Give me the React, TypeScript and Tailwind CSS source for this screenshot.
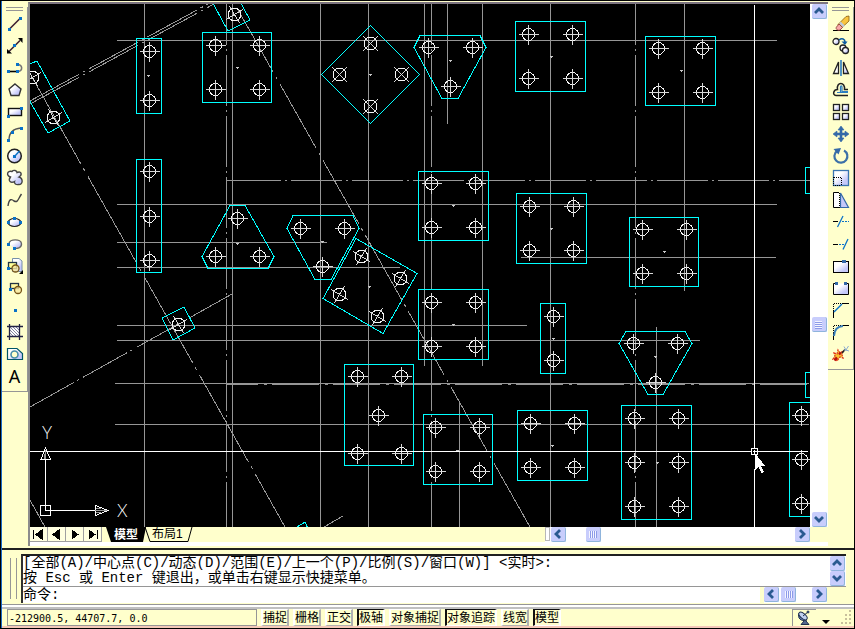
import { useState, type ReactNode } from 'react';

const GRAY = '#969696';
const CYAN = '#00ffff';

// x, y, width, height
const plates = [
  [136, 38, 25, 75], [202, 32, 69, 70], [136, 159, 25, 113], [515, 21, 70, 70],
  [645, 36, 70, 69], [418, 171, 70, 69], [516, 193, 70, 70], [629, 217, 69, 69],
  [418, 289, 70, 70], [540, 303, 25, 70], [344, 364, 69, 101], [423, 414, 69, 70],
  [517, 410, 70, 70], [621, 405, 70, 114], [789, 402, 40, 114], [805, 167, 20, 26],
  [805, 372, 20, 25],
];

const outlines = [
  '370.5,25.5 419.5,74.5 370.5,123.5 321.5,74.5',
  '420,35.5 480,35.5 486,47.5 458,98.5 442,98.5 414,47.5',
  '230,205.5 245,205.5 274,256.5 268,268.5 208,268.5 202,256.5',
  '293,215.5 353,215.5 359,228.5 331,279.5 315,279.5 287,228.5',
  '356,238.5 417,273.5 383,333.5 323,298.5',
  '626,331.5 685,331.5 692,343.5 663,394.5 648,394.5 619,343.5',
  '184,307 195,328 173,340 162,318',
  '20,68 37,61 70,121 48,133 20,84',
  '209,-4 228,31 250,20 237,-4',
  '297,527 305,522 313,540 301,540',
];

const bolts = [
  [149, 51], [149, 100], [215, 45], [259, 45], [215, 89], [259, 89],
  [149, 171], [149, 216], [149, 260], [428, 47], [472, 47], [450, 86],
  [528, 34], [572, 34], [528, 78], [572, 78], [658, 48], [702, 48], [658, 92], [702, 92],
  [431, 183], [475, 183], [431, 227], [475, 227], [529, 206], [573, 206], [529, 250], [573, 250],
  [642, 229], [686, 229], [642, 273], [686, 273], [237, 218], [215, 256], [259, 256],
  [300, 228], [344, 228], [322, 266], [431, 302], [475, 302], [431, 346], [475, 346],
  [553, 316], [553, 360], [357, 376], [401, 376], [378, 415], [357, 453], [401, 453],
  [435, 427], [479, 427], [435, 471], [479, 471], [530, 423], [574, 423], [530, 467], [574, 467],
  [633, 343], [677, 343], [655, 382], [634, 418], [678, 418], [634, 462], [678, 462],
  [634, 506], [678, 506], [801, 415], [801, 459], [801, 503],
];

// x, y, rotation
const turnedBolts = [
  [370, 43, 45], [339, 74, 45], [401, 74, 45], [370, 106, 45],
  [361, 256, 30], [400, 278, 30], [339, 294, 30], [377, 316, 30],
  [178, 324, 60], [53, 117, 60], [32, 77, 60], [234, 14, 60],
];

const centres = [
  [148, 75], [237, 67], [370, 74], [450, 60], [551, 56], [681, 70], [453, 205], [551, 228],
  [664, 251], [453, 324], [553, 338], [655, 356], [657, 462], [457, 450], [552, 445],
  [369, 286], [322, 241], [237, 243],
];

// y, from, to
const rows = [
  [40, 117, 777], [204, 117, 777], [242, 117, 327], [267, 117, 400], [325, 117, 527],
  [340, 117, 700], [383, 115, 809], [424, 115, 809], [257, 521, 776],
];

// x, from, to
const columns = [
  [144, 4, 527], [232, 4, 527], [320, 4, 527], [368, 4, 527], [424, 4, 366], [447, 4, 124],
  [482, 4, 366], [550, 4, 527], [459, 403, 527], [684, 4, 291], [656, 327, 527],
];

function Drawing() {
  return (
    <svg className="min-w-0 flex-1 bg-black" role="img" aria-label="模型空间">
      <defs>
        <linearGradient id="shade" x1="0" y1="0" x2="1" y2="1">
          <stop offset="0.35" stopColor="#ffffff" />
          <stop offset="0.75" stopColor="#c4c8fa" />
        </linearGradient>
      </defs>
      <g transform="translate(-30 -4)" fill="none" shapeRendering="crispEdges">
        <g stroke={GRAY}>
          {rows.map(([y, a, b]) => (
            <path key={y} d={`M${a} ${y + 0.5}H${b}`} />
          ))}
          {columns.map(([x, a, b]) => (
            <path key={x} d={`M${x + 0.5} ${a}V${b}`} />
          ))}
          <path d="M226 180.5H230" />
          <path d="M230 180.5H1200M226.5 -6V900M431.5 -6V900M635.5 -6V900" strokeDasharray="51 4 2 4" />
          <path d="M226 384.5H1200" strokeDasharray="32 6 3 5 15 0" />
          <path d="M30 101L208 4M30 104L214 4" strokeDasharray="56 4 3 4" />
          <path d="M32 77L285 527" strokeDasharray="100 5 3 6" />
          <path d="M237 8L530 527" strokeDasharray="74 5 3 5" />
          <path d="M30 407L232 294" strokeDasharray="50 4 2 5" />
          <path d="M30 500L45 527M324 527L343 516" />
        </g>
        <g stroke={CYAN}>
          {plates.map(([x, y, w, h]) => (
            <rect key={`${x}-${y}`} x={x + 0.5} y={y + 0.5} width={w} height={h} />
          ))}
          {outlines.map((points) => (
            <polygon key={points} points={points} />
          ))}
        </g>
        <g stroke="#f4f4f4">
          {bolts.map(([x, y]) => (
            <g key={`${x}-${y}`} transform={`translate(${x + 0.5} ${y + 0.5})`}>
              <circle r="6" />
              <path d="M-10 0H10M0 -10V10" stroke="#d8d8d8" />
            </g>
          ))}
          {turnedBolts.map(([x, y, turn]) => (
            <g key={`${x}-${y}`} transform={`translate(${x + 0.5} ${y + 0.5}) rotate(${turn})`}>
              <circle r="6.4" />
              <path d="M-10 0H10M0 -10V10" stroke="#d8d8d8" />
            </g>
          ))}
          {centres.map(([x, y]) => (
            <path key={`${x}-${y}`} d={`M${x - 1} ${y + 0.5}h3M${x + 0.5} ${y}v2`} stroke="#c8c8c8" />
          ))}
        </g>

        {/* crosshair */}
        <g stroke="#ffffff">
          <path d="M30 451.5H751M758 451.5H808M754.5 5V448M754.5 469V900" />
          <rect x="751.5" y="448.5" width="6" height="6" />
          <path d="M753 451.5h4M754.5 450v4" />
        </g>
        <path d="M755 453V470L758.500 467L761.500 473L764 472L761 466H765Z" fill="#ffffff" />

        {/* UCS icon */}
        <g stroke="#ffffff">
          <rect x="40.5" y="505.5" width="10" height="10" />
          <path d="M45.5 510.500V459M46 510.500H95" />
          <path d="M45.500 448L41 459.500H50.500ZM95.500 505.500V515.500L108 510.500Z" />
          <path d="M45.500 450V459M44 454V459M95 510.500H107M96 508.500H101M96 512.500H101" stroke="#999" />
        </g>
        <g fill="#ffffff" className="font-['Lato'] text-[17px] font-light">
          <text x="42" y="439">Y</text>
          <text x="117" y="517">X</text>
        </g>
      </g>
    </svg>
  );
}

function Node({ x, y }: { x: number; y: number }) {
  return <rect x={x - 1} y={y - 1} width="3" height="3" fill="#0a72c8" stroke="none" />;
}

const drawTools: [string, ReactNode][] = [
  ['直线', <><path d="M3 14.500L14 3.500" stroke="#402030" strokeWidth="1.6" /><Node x={3} y={14} /><Node x={14} y={3} /></>],
  ['构造线', <><path d="M3 14.500L14 3.500" stroke="#402030" strokeWidth="1.6" /><path d="M1 16.500V12L6 16.500ZM16.500 1H12L16.500 6Z" fill="#000" stroke="none" /><Node x={8} y={8} /></>],
  ['多段线', <><path d="M3 12.500H11" stroke="#000" strokeWidth="1.6" /><path d="M12 12.500C17 12 17 5 11 5.500" stroke="#777" strokeWidth="1.6" /><Node x={2} y={12} /><Node x={11} y={12} /><Node x={11} y={5} /></>],
  ['正多边形', <path d="M9 3L15 8L13 14.500H5L3 8Z" fill="url(#shade)" stroke="#333" strokeWidth="1.4" />],
  ['矩形', <><rect x="2.500" y="5.500" width="13" height="7" fill="url(#shade)" stroke="#111" strokeWidth="1.4" /><Node x={2} y={13} /><Node x={15} y={5} /></>],
  ['圆弧', <><path d="M3 15Q3 4 15 3" stroke="#555" strokeWidth="1.4" /><Node x={2} y={15} /><Node x={6} y={7} /><Node x={15} y={3} /></>],
  ['圆', <><circle cx="8.500" cy="9" r="6.800" fill="url(#shade)" strokeWidth="1.5" /><path d="M8.500 9.500L13.500 4" stroke="#0a72c8" strokeWidth="1.4" /><Node x={8} y={9} /></>],
  ['修订云线', <path d="M4.500 8C0 6.500 1 1 6 2.500C7.500 0.500 11 1.500 11 3.500C15.500 1.500 16.500 6 13 8C17.500 9.500 17 16 12.500 15.500C10 16 8 14.500 8.500 12.500C5 14.500 1.500 12 4.500 8Z" fill="url(#shade)" stroke="#444" strokeWidth="1.4" />],
  ['样条曲线', <path d="M2 15C3 7 6 8 8 10C12 12 12 8 15.500 3" stroke="#444" strokeWidth="1.4" />],
  ['椭圆', <><ellipse cx="8.500" cy="9.500" rx="6.500" ry="4" fill="url(#shade)" strokeWidth="1.2" /><Node x={2} y={9} /><Node x={8} y={5} /><Node x={14} y={9} /></>],
  ['椭圆弧', <><path d="M3 9C3 3.500 15.500 3.500 15.500 9C15.500 13 11 14 8 13" fill="url(#shade)" stroke="#666" strokeWidth="1.4" /><Node x={2} y={9} /><Node x={8} y={13} /></>],
  ['插入块', <><path d="M6.500 1.500H13L16 4V14.500H6.500Z" fill="url(#shade)" stroke="#7890a8" /><rect x="2.500" y="5.500" width="8" height="6" fill="#ffff98" stroke="#234" strokeWidth="1.3" /><circle cx="9.500" cy="11.500" r="3.500" fill="#f8e8a0" fillOpacity="0.8" stroke="#765418" strokeWidth="1.3" /><Node x={2} y={11} /><path d="M17 13V17H13Z" fill="#000" stroke="none" /></>],
  ['创建块', <><rect x="4.500" y="4.500" width="8" height="5" fill="#fff8a0" stroke="#234" strokeWidth="1.3" /><circle cx="12" cy="11" r="3.500" fill="#f8e8a0" fillOpacity="0.8" stroke="#765418" strokeWidth="1.3" /><Node x={4} y={10} /></>],
  ['点', <Node x={9} y={9} />],
  ['图案填充', <><rect x="4" y="4" width="10" height="10" fill="#fff" stroke="none" /><path d="M4 10L8 14M4 7L11 14M4 4L14 14M7 4L14 11M10 4L14 8" stroke="#668" strokeWidth="0.8" /><path d="M1 3.500H17M1 13.500H17M3.500 1V17M13.500 1V17" stroke="#224" strokeWidth="1.3" /></>],
  ['面域', <><path d="M1.500 3.500H11L16.500 8.500V14.500H1.500Z" fill="url(#shade)" stroke="#056" strokeWidth="1.2" /><circle cx="8.500" cy="9.500" r="3.500" fill="#ffffcc" stroke="#488ca8" strokeWidth="1.6" /></>],
  ['多行文字', null],
];

const modifyTools: [string, ReactNode][] = [
  ['删除', <><path d="M1 15.500H17" stroke="#000" /><path d="M14 1.500L17 1V6L9.500 13L6 9.500Z" fill="#f8c440" stroke="#865b12" strokeWidth="0.8" /><path d="M8 7.500L12 11.500" stroke="#bcc8e0" strokeWidth="2.4" /><path d="M7 9L10.500 12.500L8 15C6 16 3 14 4.500 12Z" fill="#f8a8a8" stroke="#833" strokeWidth="0.8" /></>],
  ['复制对象', <><circle cx="4" cy="4.500" r="3" fill="url(#shade)" strokeWidth="1.3" /><circle cx="11" cy="11" r="3" fill="url(#shade)" strokeWidth="1.3" /><circle cx="13.500" cy="13.500" r="3" fill="url(#shade)" strokeWidth="1.3" /><path d="M7 3C10 0.500 13 2 13 5" stroke="#0b5ba0" strokeWidth="1.6" /><path d="M9.500 4.500H15.500L13 8Z" fill="#0b5ba0" stroke="none" /></>],
  ['镜像', <><path d="M6.500 3V14.500H1.500Z" fill="#fff" strokeWidth="1.3" /><path d="M11.500 3V14.500H16.500Z" fill="url(#shade)" strokeWidth="1.3" /><path d="M9 1V17" stroke="#2a7cc0" strokeWidth="1.6" /></>],
  ['偏移', <><path d="M16 14.500H4C0 14 1.500 8.500 5.500 8.500C4 0.500 13.500 0.500 12.500 8.500H16" strokeWidth="1.5" /><path d="M16 11.500H5M8.500 11V6C8.500 4.500 10 4.500 10 6V10.500H16" stroke="#2a7cc0" strokeWidth="1.2" /></>],
  ['阵列', <g strokeWidth="1.3"><rect x="1.500" y="1.500" width="6" height="6" fill="url(#shade)" /><rect x="10.500" y="1.500" width="6" height="6" fill="url(#shade)" /><rect x="1.500" y="10.500" width="6" height="6" fill="url(#shade)" /><rect x="10.500" y="10.500" width="6" height="6" fill="url(#shade)" /></g>],
  ['移动', <path d="M9 1L12 5H10V8H13V6L17 9L13 12V10H10V13H12L9 17L6 13H8V10H5V12L1 9L5 6V8H8V5H6Z" fill="#3469a8" stroke="#3469a8" strokeWidth="0.6" />],
  ['旋转', <><path d="M12 3.500A6.500 6.500 0 1 1 5 4" stroke="#3c70a8" strokeWidth="2.2" /><path d="M1.500 2L9 1L6.500 7.500Z" fill="#3469a8" stroke="none" /></>],
  ['缩放', <><rect x="1.500" y="1.500" width="15" height="15" fill="url(#shade)" stroke="#3a74b0" strokeWidth="1.3" /><path d="M2 8.500H9.500V16M1.500 8V16.500H9" stroke="#000" strokeDasharray="1 1" /></>],
  ['拉伸', <><path d="M8.500 2L16.500 16.500H8.500Z" fill="#c4c8fa" stroke="#3469a8" strokeWidth="1.2" /><path d="M7 1.500H1.500V16.500H8" fill="#fff" stroke="#000" /><path d="M7.500 2V16" stroke="#000" strokeDasharray="1 1" /></>],
  ['修剪', <><path d="M1 8.500H6" stroke="#000" /><path d="M5.500 14L11 3" stroke="#0a72c8" strokeWidth="1.3" /><path d="M10 8.500H17" stroke="#0a72c8" strokeDasharray="2 1" /></>],
  ['延伸', <><path d="M1 9.500H6" stroke="#000" /><path d="M11 14.500L16 4" stroke="#0a72c8" strokeWidth="1.3" /><path d="M7 9.500H13" stroke="#0a72c8" strokeDasharray="2 1" /></>],
  ['打断于点', <><rect x="1.500" y="4.500" width="15" height="11" fill="url(#shade)" stroke="#000" /><rect x="10" y="3" width="4" height="3" fill="#3469a8" stroke="none" /></>],
  ['打断', <><rect x="1.500" y="4.500" width="15" height="11" fill="url(#shade)" stroke="none" /><path d="M4 4.500H1.500V15.500H16.500V4.500H14" stroke="#000" /><rect x="3" y="3" width="3" height="3" fill="#3469a8" stroke="none" /><rect x="12" y="3" width="3" height="3" fill="#3469a8" stroke="none" /></>],
  ['倒角', <><path d="M1.500 17V10M10 2.500H17" stroke="#000" /><path d="M1.500 10V2.500H10" stroke="#000" strokeDasharray="1 1" /><path d="M2 11L10 3" stroke="#0a72c8" strokeWidth="1.5" /></>],
  ['圆角', <><path d="M1.500 17V10M10 2.500H17" stroke="#000" /><path d="M1.500 10V2.500H10" stroke="#000" strokeDasharray="1 1" /><path d="M2 13Q2.500 3.500 11 3" stroke="#3a80bc" strokeWidth="2" /></>],
  ['分解', <><path d="M2 8L5 9L6 5L8 8L11 6L10 10L11 13L8 12L5 16L4 13L1 14L3 11Z" fill="#f8c030" stroke="#e03018" strokeWidth="1.2" strokeDasharray="2 1" /><path d="M2.500 15.500L5 12.500M7 9.500L9 7.500" stroke="#b81010" strokeWidth="2.4" /><path d="M10 8L13 4.500" stroke="#222" strokeWidth="1.6" /><path d="M12 1.500L14 5M16.500 1L14 5L17 6M12 5H15" stroke="#8cacd0" /></>],
];

function Palette({ tools, label }: { tools: [string, ReactNode][]; label: string }) {
  return (
    <aside aria-label={label} className="w-[26px] shrink-0 pt-0.5">
      <div className="border-r border-b border-[#969696] pb-1">
        <div className="mx-1 mt-1 h-1 border-t border-b border-[#969696]" />
        <div className="flex flex-col items-center pt-0.5">
          {tools.map(([name, icon]) => (
            <button key={name} title={name} className="flex h-[22px] w-[22px] items-center justify-center">
              {icon ? (
                <svg width="18" height="18" viewBox="0 0 18 18" fill="none" stroke="#222">
                  {icon}
                </svg>
              ) : (
                <span className="font-['Noto_Sans'] text-lg leading-none">A</span>
              )}
            </button>
          ))}
        </div>
      </div>
    </aside>
  );
}

const arrows = {
  up: 'M3 9L7 5L11 9',
  down: 'M3 5L7 9L11 5',
  left: 'M9 3L5 7L9 11',
  right: 'M5 3L9 7L5 11',
};

function ScrollButton({ dir }: { dir: keyof typeof arrows }) {
  return (
    <button
      aria-label={dir}
      className="flex h-[15px] w-[15px] shrink-0 items-center justify-center rounded-xs border-r border-b border-[#8fb4dc] bg-[#c8cdfc]"
    >
      <svg width="14" height="14" viewBox="0 0 14 14" fill="none" stroke="#2a5a90" strokeWidth="2.8">
        <path d={arrows[dir]} />
      </svg>
    </button>
  );
}

function Thumb({ vertical = false }: { vertical?: boolean }) {
  return (
    <div className="flex h-[15px] w-[15px] shrink-0 items-center justify-center rounded-xs border-r border-b border-[#8fb4dc] bg-[#c8cdfc]">
      <svg width="9" height="9" viewBox="0 0 9 9" stroke="#f4f4ff" shapeRendering="crispEdges">
        <path d={vertical ? 'M1 1.500H8M1 3.500H8M1 5.500H8M1 7.500H8' : 'M1.500 1V8M3.500 1V8M5.500 1V8M7.500 1V8'} />
        <path
          stroke="#8c9ae8"
          d={vertical ? 'M1 2.500H8M1 4.500H8M1 6.500H8M1 8.500H8' : 'M2.500 1V8M4.500 1V8M6.500 1V8M8.500 1V8'}
        />
      </svg>
    </div>
  );
}

const pagers = [
  { name: '首页', d: 'M3.500 3V12M12 3V12L6 7.500Z' },
  { name: '上一页', d: 'M11 3V12L5 7.500Z' },
  { name: '下一页', d: 'M6 3V12L12 7.500Z' },
  { name: '末页', d: 'M5 3V12L11 7.500ZM13.500 3V12' },
];

function LayoutBar() {
  return (
    <div className="flex h-[15px]">
      <div className="flex min-w-0 flex-1">
        {pagers.map(({ name, d }) => (
          <button key={name} aria-label={name} className="h-[15px] w-[18px] border-r border-b border-[#a0a0a0] bg-[#ffffe0]">
            <svg width="16" height="14" viewBox="0 0 16 14" stroke="#000" shapeRendering="crispEdges">
              <path d={d} strokeWidth="1" />
            </svg>
          </button>
        ))}
        <svg width="8" height="15" className="ml-1 shrink-0">
          <path d="M0 0H8V15H5Z" />
        </svg>
        <button className="bg-black text-xs leading-[14px] font-bold text-white">模型</button>
        <svg width="14" height="15" className="shrink-0">
          <path d="M0 0H8L5 15H0Z" />
          <path d="M7 0L12 14.500H14" fill="none" stroke="#000" />
        </svg>
        <button className="border-b border-black text-xs leading-[14px]">布局1</button>
        <svg width="12" height="15" className="shrink-0">
          <path d="M0 14.500H5L9 0" fill="none" stroke="#000" />
        </svg>
      </div>
      <div className="flex w-[34%] bg-white">
        <div className="mr-px h-3.5 w-[5px] border border-[#b8b8b8]" />
        <ScrollButton dir="left" />
        <div className="grow-[20]" />
        <Thumb />
        <div className="grow-[193]" />
        <ScrollButton dir="right" />
      </div>
    </div>
  );
}

function CommandPanel() {
  const [command, setCommand] = useState('');
  return (
    <section className="flex border-t-2 border-[#202020] px-1.5 pt-1 pb-px font-['Liberation_Mono','Noto_Sans_CJK_SC',monospace] text-sm leading-[15px]">
      <div className="my-1 mr-1 ml-0.5 w-[7px] border-x border-[#969696]" />
      <div className="min-w-0 flex-1 border-t-2 border-l-2 border-t-[#202020] border-l-[#303030] bg-white">
        <div className="flex h-[31px] border-b border-[#969696]">
          <div className="min-w-0 flex-1 overflow-hidden whitespace-nowrap">
            <p>[全部(A)/中心点(C)/动态(D)/范围(E)/上一个(P)/比例(S)/窗口(W)] &lt;实时&gt;:</p>
            <p>按 Esc 或 Enter 键退出，或单击右键显示快捷菜单。</p>
          </div>
          <div className="flex w-4 flex-col">
            <ScrollButton dir="up" />
            <ScrollButton dir="down" />
          </div>
        </div>
        <div className="flex h-4 items-center">
          <label htmlFor="command" className="shrink-0">命令:</label>
          <input
            id="command"
            value={command}
            onChange={(e) => setCommand(e.target.value)}
            className="h-4 min-w-0 flex-1 px-1 outline-none"
          />
          <div className="flex h-4 w-[86px] shrink-0 border-l-4 border-[#ffffcc]">
            <ScrollButton dir="left" />
            <div className="w-0.5" />
            <Thumb />
            <div className="w-4" />
            <ScrollButton dir="right" />
            <div className="flex-1 bg-[#ffffcc]" />
          </div>
        </div>
      </div>
      <div className="w-0.5" />
    </section>
  );
}

const modes = [
  { name: '捕捉', on: false },
  { name: '栅格', on: false },
  { name: '正交', on: false },
  { name: '极轴', on: true },
  { name: '对象捕捉', on: false },
  { name: '对象追踪', on: true },
  { name: '线宽', on: false },
  { name: '模型', on: true },
];

function StatusBar() {
  const [active, setActive] = useState(modes.filter((m) => m.on).map((m) => m.name));

  const toggle = (name: string) =>
    setActive(active.includes(name) ? active.filter((n) => n !== name) : [...active, name]);

  return (
    <footer className="flex h-[19px] border-b-2 border-[#f4c8b8] pl-[5px] text-xs">
      <output className="w-[250px] border border-[#969696] pl-px font-['DejaVu_Sans_Mono'] text-[10px] leading-[18px]">
        -212900.5, 44707.7, 0.0
      </output>
      <div className="ml-1 flex gap-1">
        {modes.map(({ name }) => (
          <button
            key={name}
            aria-pressed={active.includes(name)}
            onClick={() => toggle(name)}
            className={
              active.includes(name)
                ? 'border-t border-r-2 border-b border-l-2 border-t-[#101010] border-r-white border-b-white border-l-[#101010] pt-px leading-[14px]'
                : 'border-t border-r-2 border-b border-l-2 border-t-white border-r-[#b0b0b0] border-b-[#b0b0b0] border-l-white pt-px leading-[14px]'
            }
          >
            {name}
          </button>
        ))}
      </div>
      <div className="flex-1" />
      <button aria-label="通信中心" className="w-6 border-t border-l border-[#969696] pl-0.5">
        <svg width="18" height="16" viewBox="0 0 18 16" fill="none" stroke="#20304c">
          <path d="M4 3C2 8 6 12 12 10Z" fill="#6480b8" />
          <ellipse cx="8" cy="6" rx="5" ry="2.500" transform="rotate(40 8 6)" fill="#c0d0f0" />
          <path d="M8 6L13 2M9 11L6 14.500H14L11 11" fill="#52688c" />
          <circle cx="13" cy="2" r="1" fill="#6a8ec0" />
        </svg>
      </button>
      <button aria-label="状态栏菜单" className="flex w-5 items-end justify-center pb-0.5">
        <svg width="8" height="4">
          <path d="M0 0H8L4 4Z" />
        </svg>
      </button>
      <svg width="14" height="16" className="ml-1 shrink-0" fill="#c8c09c">
        <path d="M9 1h2v2h-2zM9 5h2v2h-2zM5 5h2v2h-2zM9 9h2v2h-2zM5 9h2v2h-2zM1 13h2v2h-2zM5 13h2v2h-2zM9 13h2v2h-2z" />
      </svg>
    </footer>
  );
}

export default function App() {
  return (
    <div className="flex min-h-screen w-full flex-col border border-black bg-[#ffffcc] font-['Liberation_Sans','Noto_Sans_CJK_SC',sans-serif] text-black">
      <div className="flex flex-1 flex-col border-l border-[#1c6cc8]">
        <div className="flex flex-1">
          <Palette tools={drawTools} label="绘图" />
          <main className="mt-px flex min-w-0 flex-1 flex-col border-t-2 border-l-2 border-t-[#7c7480] border-l-[#8c8c8c]">
            <div className="flex flex-1">
              <Drawing />
              <div className="flex w-[18px] flex-col items-center bg-white">
                <ScrollButton dir="up" />
                <div className="grow-[297]" />
                <Thumb vertical />
                <div className="grow-[179]" />
                <ScrollButton dir="down" />
              </div>
            </div>
            <div className="flex border-b-4 border-white">
              <div className="min-w-0 flex-1">
                <LayoutBar />
              </div>
              <div className="w-[18px]" />
            </div>
          </main>
          <Palette tools={modifyTools} label="修改" />
        </div>
        <div className="h-[2px]" />
        <CommandPanel />
        <div className="h-[5px] border-t border-b-2 border-t-[#969696] border-b-[#c0c0c0] bg-white" />
        <StatusBar />
      </div>
    </div>
  );
}
